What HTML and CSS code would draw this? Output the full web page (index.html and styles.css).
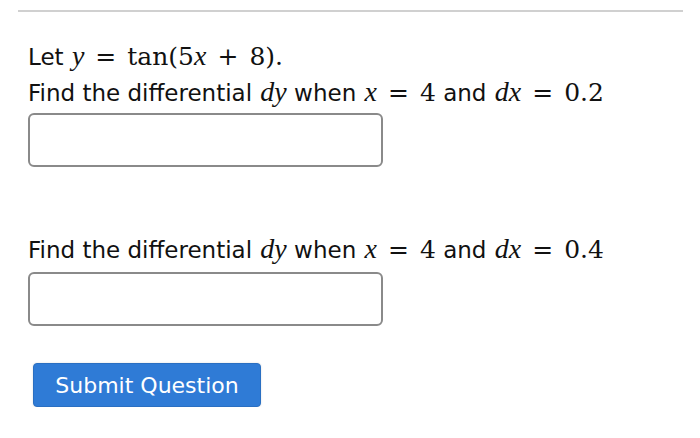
FILE: index.html
```html
<!DOCTYPE html>
<html>
<head>
<meta charset="utf-8">
<link rel="stylesheet" href="styles.css">
</head>
<body>
<div class="page">
  <hr class="rule">
  <div class="question">
    <p class="line">Let <span class="m"><i>y</i><span class="op">=</span>tan(5<i>x</i><span class="op">+</span>8).</span></p>
    <p class="line">Find the differential <span class="m"><i>dy</i></span> when <span class="m"><i>x</i><span class="op">=</span>4</span> and <span class="m"><i>dx</i><span class="op">=</span>0.2</span></p>
    <input class="answer" type="text">
    <p class="line second">Find the differential <span class="m"><i>dy</i></span> when <span class="m"><i>x</i><span class="op">=</span>4</span> and <span class="m"><i>dx</i><span class="op">=</span>0.4</span></p>
    <input class="answer" type="text">
    <div class="actions"><button class="submit">Submit Question</button></div>
  </div>
</div>
</body>
</html>
```
FILE: styles.css
```css
html, body { margin: 0; padding: 0; background: #fff; }
body { font-family: "DejaVu Sans", Verdana, sans-serif; color: #111; }
.page { padding: 10px 17px 0 18px; }
.rule { border: 0; border-top: 2px solid #d0d0d0; margin: 0; }
.question { padding: 27px 0 0 10px; }
.line { margin: 0; font-size: 23px; line-height: 36px; height: 36px; white-space: nowrap; }
.m { font-family: "DejaVu Serif", "Liberation Serif", serif; font-size: 25px; line-height: 1; padding-left: 1px; }
.m i { font-family: "Liberation Serif", serif; font-style: italic; font-size: 28px; }
.op { padding: 0 11px; }
.answer { display: block; box-sizing: border-box; width: 355px; height: 54px; margin: 2px 0 0 0; border: 2px solid #8a8a8a; border-radius: 6px; background: #fff; }
.second { margin-top: 65px; }
.second + .answer { margin-top: 4px; }
.actions { padding: 37px 0 0 5px; }
.submit { display: block; box-sizing: border-box; background: #2f7bd6; color: #fff; border: 1px solid #2a6fc2; border-radius: 4px; font-family: "DejaVu Sans", sans-serif; font-size: 22px; height: 44px; width: 228px; padding: 0; box-shadow: 0 0 2px rgba(0,0,0,0.15); }
```
